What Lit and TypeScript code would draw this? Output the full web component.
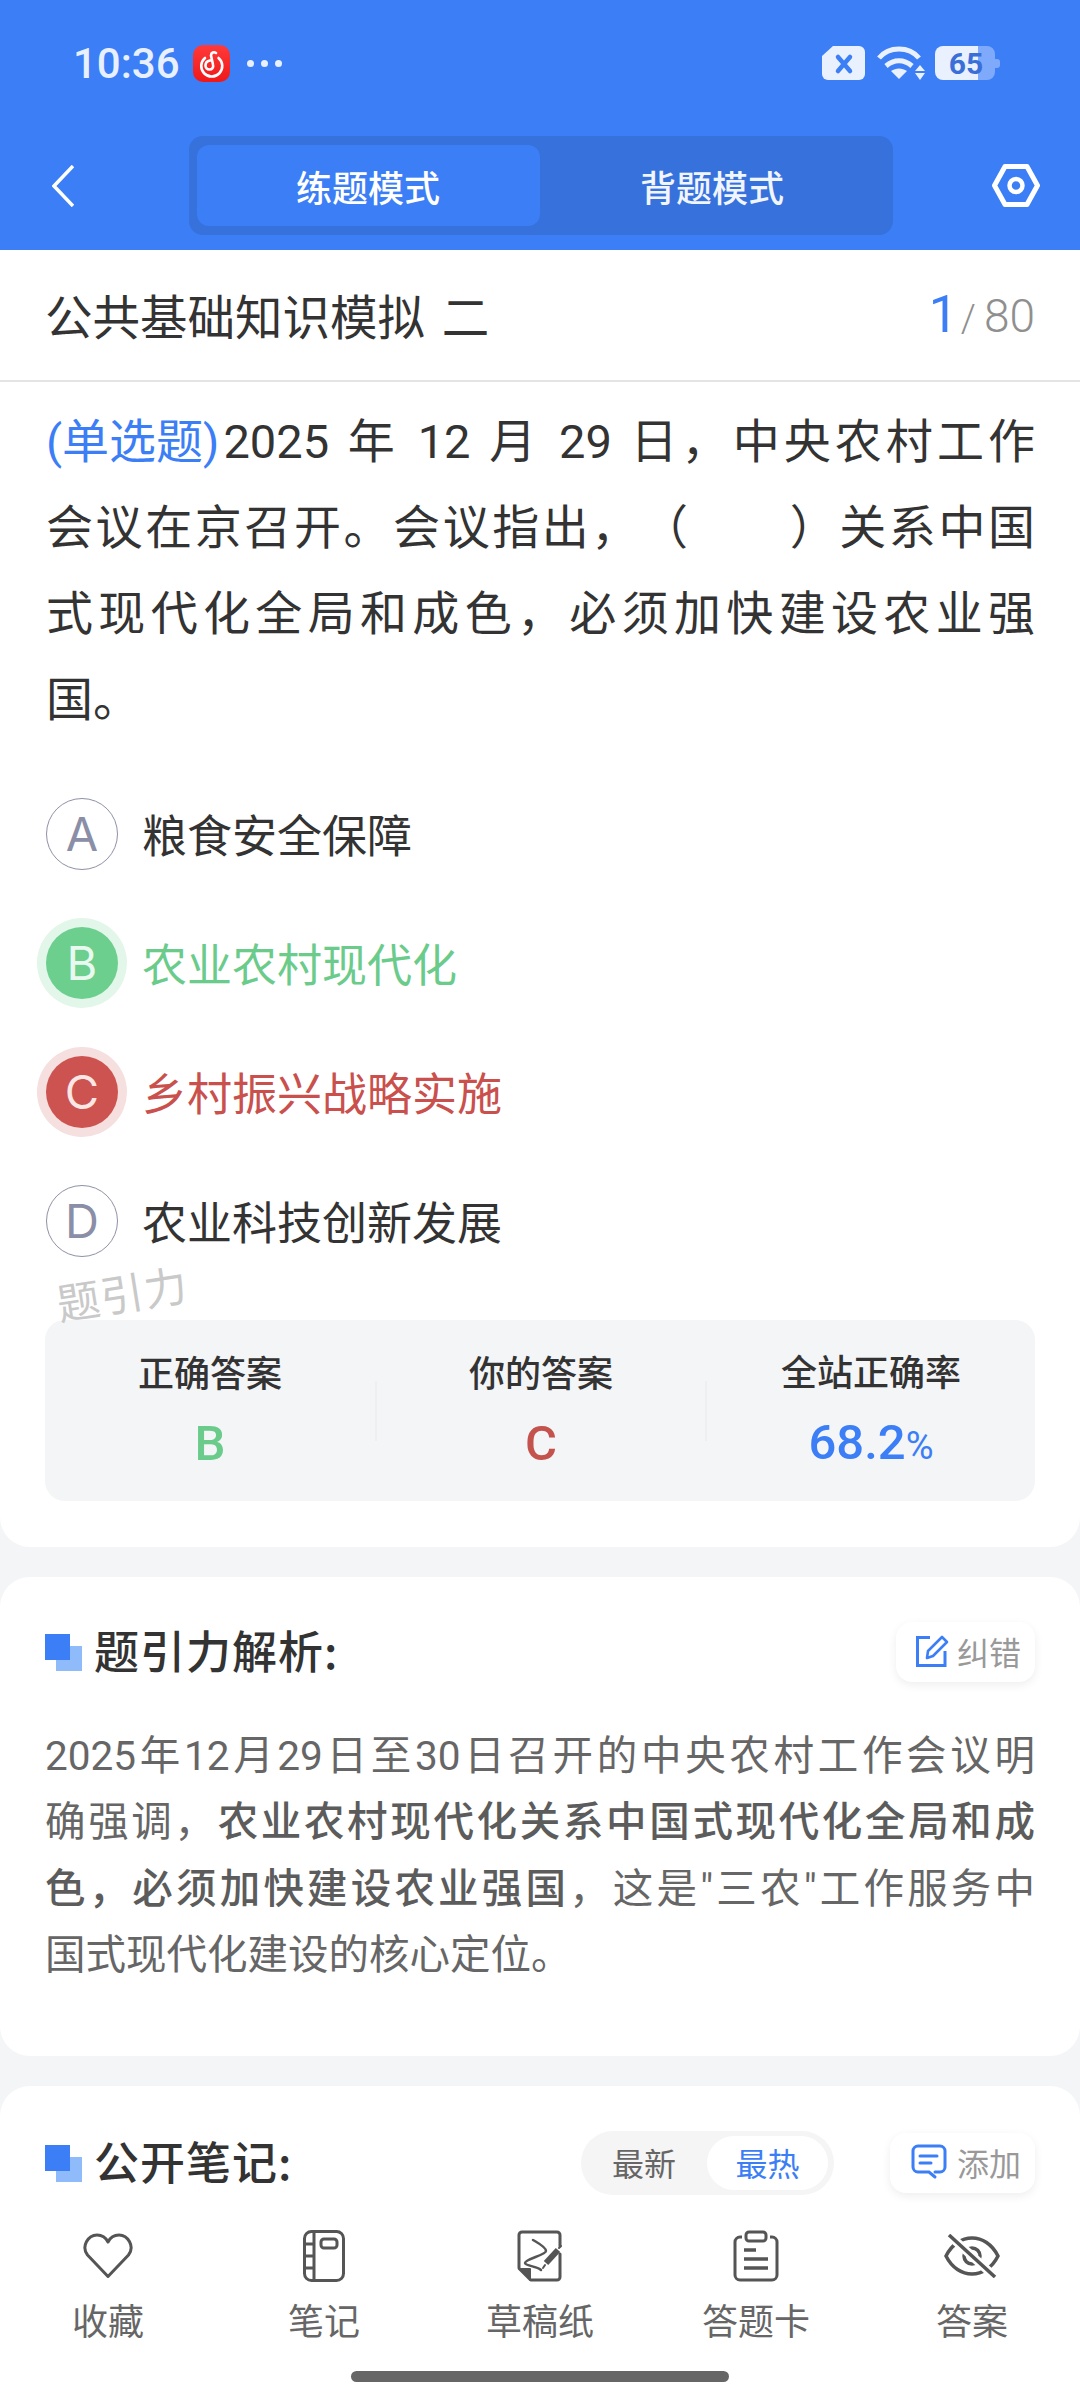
import { LitElement, css, html, svg } from 'lit';
import { customElement } from 'lit/decorators.js';

const options = [
	{ key: 'A', text: '粮食安全保障', state: '' },
	{ key: 'B', text: '农业农村现代化', state: 'right' },
	{ key: 'C', text: '乡村振兴战略实施', state: 'wrong' },
	{ key: 'D', text: '农业科技创新发展', state: '' },
];

const tabIcons = {
	heart: svg`<svg width="52" height="46" viewBox="0 0 52 46" fill="none" stroke="#555" stroke-width="3" stroke-linejoin="round"><path d="M26 43.5 5.5 22C-1 13.500 6 2 15 2c5 0 9 3 11 7 2-4 6-7 11-7 9 0 16 11.500 9.500 20z"/></svg>`,
	book: svg`<svg width="42" height="52" viewBox="0 0 42 52" fill="none" stroke="#555" stroke-width="3"><rect x="1.500" y="1.500" width="39" height="49" rx="7"/><path d="M11 2v48M2 14h9M2 26h9M2 38h9"/><rect x="18" y="9" width="16" height="9" rx="3"/></svg>`,
	draft: svg`<svg width="46" height="52" viewBox="0 0 46 52" fill="none" stroke="#555" stroke-width="3" stroke-linecap="round" stroke-linejoin="round"><path d="M43 16V5a3 3 0 0 0-3-3H5a3 3 0 0 0-3 3v33M14 50h26a3 3 0 0 0 3-3V24"/><path d="M2 39h11v11z" fill="#555" stroke-width="2"/><path stroke-width="2.500" d="M16 10c5 3 13 7 13 11 0 4-21 8-21 12 0 3 12 3 16 7"/><path stroke-width="6" stroke-linecap="butt" d="m29 33 12-13"/><path stroke-width="2" d="m26 38 2-3M42 18l2-2"/></svg>`,
	card: svg`<svg width="46" height="52" viewBox="0 0 46 52" fill="none" stroke="#555" stroke-width="3"><path d="M9 7H7a5 5 0 0 0-5 5v33a5 5 0 0 0 5 5h32a5 5 0 0 0 5-5V12a5 5 0 0 0-5-5h-2"/><rect x="13" y="2" width="20" height="9" rx="3"/><path stroke-width="3.500" d="M11 20h12M11 29h24M11 38h24"/></svg>`,
	eye: svg`<svg width="56" height="44" viewBox="0 0 56 44" fill="none" stroke="#555" stroke-width="3.500"><path d="M2 22C8 10 18 4 28 4s20 6 26 18c-6 12-16 18-26 18S8 34 2 22z"/><circle cx="28" cy="22" r="8"/><path stroke="#fff" stroke-width="9" d="m5 1 46 42"/><path d="m5 1 46 42"/></svg>`,
};

const tabs = [
	{ icon: tabIcons.heart, label: '收藏' },
	{ icon: tabIcons.book, label: '笔记' },
	{ icon: tabIcons.draft, label: '草稿纸' },
	{ icon: tabIcons.card, label: '答题卡' },
	{ icon: tabIcons.eye, label: '答案' },
];

const squares = html`<svg class="squares" width="37" height="37" viewBox="0 0 37 37"><rect x="11" y="12" width="26" height="25" fill="#8fbbfb"/><rect width="25" height="26" fill="#3b7ef6"/></svg>`;

@customElement('app-root')
export class AppRoot extends LitElement {
	static styles = css`
    :host {
      display: block;
      width: 1080px;
      height: 2400px;
      overflow: hidden;
      background: #f4f5f7;
      font-family: "Noto Sans CJK SC", sans-serif;
      color: #333;
      text-spacing-trim: space-all;
    }

    .page {
      height: 2400px;
      display: flex;
      flex-direction: column;
    }

    /* blue top */
    .top {
      background: #3b7ef6;
      height: 250px;
      flex: none;
    }

    .status {
      height: 126px;
      padding: 0 80px 0 73px;
      display: flex;
      align-items: center;
      box-sizing: border-box;
    }

    .time {
      font: 500 42px Roboto, sans-serif;
      color: #e8f0fe;
      width: 120px;
    }

    .dots {
      display: flex;
      gap: 7px;
      margin-left: 17px;
    }

    .dots i {
      width: 7px;
      height: 7px;
      border-radius: 50%;
      background: #e8f0fe;
    }

    .status-right {
      margin-left: auto;
      display: flex;
      align-items: center;
      gap: 12px;
    }

    .batt {
      overflow: visible;
      margin-left: -2px;
    }

    .nav {
      height: 99px;
      margin-top: 10px;
      padding: 0 40px 0 52px;
      display: flex;
      align-items: center;
      justify-content: space-between;
    }

    .mode {
      width: 704px;
      height: 99px;
      margin-left: 15px;
      box-sizing: border-box;
      padding: 9px 8px;
      display: grid;
      grid-template-columns: 343px 1fr;
      border-radius: 14px;
      background: #3671dc;
      font-size: 36px;
      font-weight: 500;
      color: #f1f5fe;
    }

    .mode div {
      display: flex;
      align-items: center;
      justify-content: center;
      border-radius: 12px;
    }

    .mode .on {
      background: #3b7ef6;
      color: #fff;
    }

    /* first card */
    .paper {
      flex: none;
      background: #fff;
      border-radius: 0 0 30px 30px;
      padding-bottom: 46px;
      position: relative;
    }

    .title-row {
      height: 132px;
      box-sizing: border-box;
      border-bottom: 2px solid #e4e4e4;
      padding: 0 45px 2px 45px;
      display: flex;
      align-items: center;
      justify-content: space-between;
      font-size: 47.500px;
      font-weight: 400;
      word-spacing: 6px;
    }

    .count {
      display: flex;
      align-items: baseline;
      font: 300 46px Roboto, sans-serif;
      color: #8f8f8f;
    }

    .count b {
      font-size: 52px;
      font-weight: 400;
      color: #3b7ef6;
      margin-right: 3px;
    }

    .count i {
      font-style: normal;
      font-size: 38px;
      margin-right: 8px;
    }

    .question {
      padding: 17px 45px 0 46px;
      font-family: Roboto, "Noto Sans CJK SC", sans-serif;
      font-size: 47px;
      line-height: 86px;
      color: #333;
    }

    .question div,
    .explain div {
      text-align: justify;
      text-align-last: justify;
    }

    .question div:last-child,
    .explain div:last-child {
      text-align-last: left;
    }

    .question .first {
      word-spacing: 3px;
    }

    .tag {
      display: inline-block;
      margin-right: 4px;
      color: #3b7ef6;
    }

    .options {
      padding: 26px 46px 0;
    }

    .option {
      height: 129px;
      display: flex;
      align-items: center;
      gap: 24px;
      font-size: 45px;
    }

    .letter {
      width: 72px;
      height: 72px;
      box-sizing: border-box;
      border: 1.500px solid #8f91a5;
      border-radius: 50%;
      display: flex;
      align-items: center;
      justify-content: center;
      font: 400 47px Inter, sans-serif;
      color: #8a8ea6;
      flex: none;
    }

    .right {
      color: #6acb8b;
    }

    .right .letter {
      background: #6ccf8d;
      border: none;
      color: #e9f9ef;
      box-shadow: 0 0 0 9px #e2f6ea;
    }

    .wrong {
      color: #c9504c;
    }

    .wrong .letter {
      background: #cc534f;
      border: none;
      color: #f9e6e5;
      box-shadow: 0 0 0 9px #f5dfdf;
    }

    .mark {
      position: absolute;
      left: 52px;
      top: 1272px;
      font-size: 43px;
      color: #c9c9c9;
      transform: rotate(-9deg);
      transform-origin: left top;
      line-height: 60px;
      letter-spacing: 1px;
    }

    .stats {
      margin: 35px 45px 0;
      height: 181px;
      border-radius: 20px;
      background: #f4f5f7;
      display: grid;
      grid-template-columns: repeat(3, 1fr);
      align-items: center;
    }

    .stat {
      height: 60px;
      display: flex;
      flex-direction: column;
      align-items: center;
      justify-content: center;
      gap: 27px;
      border-left: 2px solid #eeeff1;
    }

    .stat:first-child {
      border-left: none;
    }

    .stat span {
      font-size: 36px;
      font-weight: 500;
      line-height: 46px;
      margin-top: -6px;
    }

    .stat b {
      font: 500 49px/46px Roboto, sans-serif;
    }

    .stat b small {
      font-size: 38px;
      font-weight: 400;
    }

    .blue {
      color: #3b7ef6;
    }

    .red {
      color: #c4524d;
    }

    /* lower cards */
    .card {
      flex: none;
      margin-top: 30px;
      background: #fff;
      border-radius: 30px;
      padding: 45px 45px 0 45px;
    }

    .card-head {
      height: 60px;
      display: flex;
      align-items: center;
    }

    .card-title {
      display: flex;
      align-items: center;
      font-size: 45px;
      font-weight: 500;
      letter-spacing: 1px;
      margin: -5px auto 0 0;
    }

    .squares {
      margin: 5px 12px 0 0;
    }

    .pill-btn {
      height: 60px;
      box-sizing: border-box;
      border-radius: 16px;
      background: #fff;
      box-shadow: 0 3px 10px rgba(0, 0, 0, 0.07);
      padding: 0 14px 3px 20px;
      display: flex;
      align-items: center;
      gap: 8px;
      font-size: 32px;
      color: #999;
    }

    .pill-btn.add {
      padding: 0 14px 3px 21px;
      gap: 10px;
    }

    .explain {
      margin-top: 41px;
      padding-bottom: 68px;
      font-family: Roboto, "Noto Sans CJK SC", sans-serif;
      font-size: 40.500px;
      line-height: 66.300px;
      color: #666;
    }

    .explain b {
      font-weight: 500;
      color: #5c5c5c;
    }

    .sort {
      width: 253px;
      height: 64px;
      box-sizing: border-box;
      margin-right: 56px;
      padding: 5px 6px 5px 0;
      border-radius: 32px;
      background: #f5f5f5;
      display: grid;
      grid-template-columns: 126px 1fr;
      font-size: 32px;
      color: #666;
    }

    .sort div {
      display: flex;
      align-items: center;
      justify-content: center;
      padding-bottom: 3px;
      border-radius: 27px;
    }

    .sort .on {
      background: #fff;
      color: #3b7ef6;
    }

    .third {
      flex: 1;
      padding-top: 47px;
    }

    /* bottom bar */
    .bar {
      flex: none;
      height: 196px;
      margin-top: -196px;
      position: relative;
      background: #fff;
      display: grid;
      grid-template-columns: repeat(5, 216px);
    }

    .tab {
      display: flex;
      flex-direction: column;
      align-items: center;
      font-size: 36px;
      color: #666;
    }

    .tab .ico {
      height: 52px;
      margin-top: 26px;
      display: flex;
      align-items: center;
    }

    .tab span {
      margin-top: 12px;
      line-height: 50px;
    }

    .home {
      position: absolute;
      left: 351px;
      bottom: 18px;
      width: 378px;
      height: 11px;
      border-radius: 6px;
      background: #666;
    }
  `;

	renderStatus() {
		return html`
      <div class="status">
        <div class="time">10:36</div>
        <svg class="app" width="37" height="37" viewBox="0 0 37 37" fill="none">
          <defs><linearGradient id="r" x1="0" y1="0" x2="0" y2="1"><stop offset="0" stop-color="#ff3a3a"/><stop offset="1" stop-color="#f01818"/></linearGradient></defs>
          <rect width="37" height="37" rx="10" fill="url(#r)"/>
          <path stroke="#fff" stroke-width="2.600" stroke-linecap="round" d="M12 13a10.500 10.500 0 1 0 13.500 0M23 8c-2-1.500-5-.5-5 2.500l2 9c.8 3-1 5-3.500 5s-4-2-4-4c0-2.500 2-4.500 4.500-5"/>
        </svg>
        <div class="dots"><i></i><i></i><i></i></div>
        <div class="status-right">
          <svg width="43" height="34" viewBox="0 0 43 34">
            <path fill="#eaf1fe" d="M11 0h26a6 6 0 0 1 6 6v22a6 6 0 0 1-6 6H6a6 6 0 0 1-6-6V10z"/>
            <path stroke="#3b7ef6" stroke-width="4.500" stroke-linecap="round" d="m16 11 12 14M28 11 16 25"/>
          </svg>
          <svg width="48" height="34" viewBox="0 0 48 34" fill="none" stroke="#eaf1fe" stroke-width="5">
            <path d="M2 12C12 0 32 0 42 12"/>
            <path d="M9 20c8-7 18-7 26 0"/>
            <path fill="#eaf1fe" stroke="none" d="M14 25c5-3.500 11-3.500 16 0l-8 8z"/>
            <path fill="#eaf1fe" stroke="none" d="m43 19 5 6H38zM38 27h10l-5 7z"/>
          </svg>
          <svg class="batt" width="65" height="34" viewBox="0 0 65 34">
            <path fill="#7fa9fa" d="M30 0h22a8 8 0 0 1 8 8v5h2a3 3 0 0 1 3 3v3a3 3 0 0 1-3 3h-2v4a8 8 0 0 1-8 8H30z"/>
            <path fill="#eaf1fe" d="M8 0h35v34H8a8 8 0 0 1-8-8V8a8 8 0 0 1 8-8z"/>
            <text x="31" y="28" text-anchor="middle" font-family="Roboto, sans-serif" font-size="30" font-weight="700" fill="#3a6fd8">65</text>
          </svg>
        </div>
      </div>
    `;
	}

	render() {
		return html`
      <div class="page">
        <div class="top">
          ${this.renderStatus()}
          <div class="nav">
            <svg width="22" height="42" viewBox="0 0 22 42" fill="none" stroke="#fff" stroke-width="3.500"><path d="M21 1 2 21l19 20"/></svg>
            <div class="mode">
              <div class="on">练题模式</div>
              <div>背题模式</div>
            </div>
            <svg width="48" height="43" viewBox="0 0 48 43" fill="none" stroke="#fff" stroke-width="5" stroke-linejoin="round"><path d="M13 2.500h22l10.500 19-10.500 19H13l-10.500-19z"/><circle cx="24" cy="21.500" r="6.500" stroke-width="4.500"/></svg>
          </div>
        </div>

        <div class="paper">
          <div class="title-row">
            <div>公共基础知识模拟 二</div>
            <div class="count"><b>1</b><i>/</i>80</div>
          </div>
          <div class="question">
            <div class="first"><span class="tag">(单选题)</span>2025 年 12 月 29 日，中央农村工作</div>
            <div>会议在京召开。会议指出，（　　）关系中国</div>
            <div>式现代化全局和成色，必须加快建设农业强</div>
            <div>国。</div>
          </div>
          <div class="options">
            ${options.map(
			o => html`
                <div class="option ${o.state}">
                  <div class="letter">${o.key}</div>
                  <div>${o.text}</div>
                </div>
              `,
		)}
          </div>
          <div class="stats">
            <div class="stat"><span>正确答案</span><b class="right">B</b></div>
            <div class="stat"><span>你的答案</span><b class="red">C</b></div>
            <div class="stat"><span>全站正确率</span><b class="blue">68.2<small>%</small></b></div>
          </div>
        </div>
        <div class="mark">题引力</div>

        <div class="card">
          <div class="card-head">
            <div class="card-title">${squares}题引力解析:</div>
            <div class="pill-btn">
              <svg width="33" height="33" viewBox="0 0 33 33" fill="none" stroke="#3b7ef6" stroke-width="3"><path d="M14 3.500H1.500v28H29V17"/><path stroke-width="2.600" stroke-linejoin="round" d="m11 24 1-7L26 3l5 5-14 14z"/></svg>
              纠错
            </div>
          </div>
          <div class="explain">
            <div>2025年12月29日至30日召开的中央农村工作会议明</div>
            <div>确强调，<b>农业农村现代化关系中国式现代化全局和成</b></div>
            <div><b>色，必须加快建设农业强国</b>，这是"三农"工作服务中</div>
            <div>国式现代化建设的核心定位。</div>
          </div>
        </div>

        <div class="card third">
          <div class="card-head">
            <div class="card-title">${squares}公开笔记:</div>
            <div class="sort">
              <div>最新</div>
              <div class="on">最热</div>
            </div>
            <div class="pill-btn add">
              <svg width="36" height="36" viewBox="0 0 36 36" fill="none" stroke="#3b7ef6" stroke-width="3" stroke-linecap="round"><path d="M24 28h5a5 5 0 0 0 5-5V7a5 5 0 0 0-5-5H7a5 5 0 0 0-5 5v16a5 5 0 0 0 5 5h11l6 5"/><path d="M9 12h17M9 19h11"/></svg>
              添加
            </div>
          </div>
        </div>

        <div class="bar">
          ${tabs.map(t => html`<div class="tab"><div class="ico">${t.icon}</div><span>${t.label}</span></div>`)}
          <div class="home"></div>
        </div>
      </div>
    `;
	}
}
